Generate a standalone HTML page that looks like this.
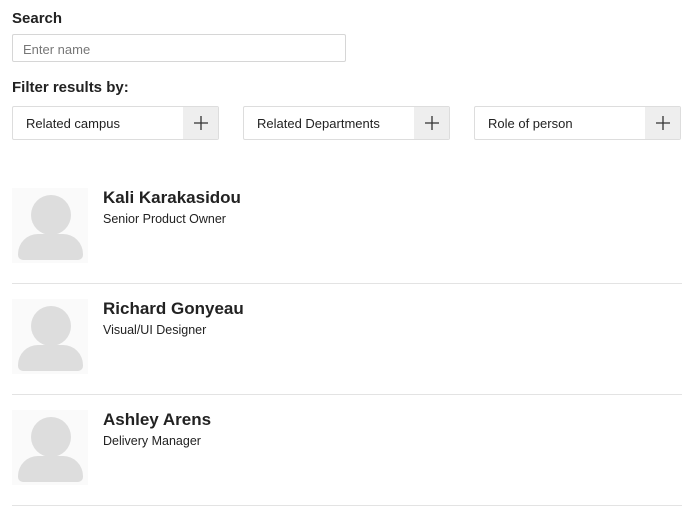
<!DOCTYPE html>
<html><head><style>
body{margin:0;background:#fff;font-family:"Liberation Sans",Arial,sans-serif;color:#222;width:700px;height:518px;overflow:hidden;position:relative}
.a{position:absolute}
h{font-weight:bold;font-size:15px;position:absolute}
.inp{left:12px;top:34px;width:334px;height:28px;border:1px solid #d6d6d6;border-radius:2px;box-sizing:border-box;font-size:13px;color:#777;padding:7px 10px}
.f{top:106px;width:207px;height:34px;border:1px solid #ddd;border-radius:2px;box-sizing:border-box;font-size:13px;color:#222}
.f span{position:absolute;left:13px;top:9px}
.f b{position:absolute;right:0;top:0;width:35px;height:32px;background:#eee}
.f svg{position:absolute;left:11px;top:9px}
.av{left:12px;width:76px;height:75px;background:#fafafa;overflow:hidden}
.hd{position:absolute;left:19px;top:7px;width:40px;height:40px;border-radius:50%;background:#ddd}
.bd{position:absolute;left:6px;top:46px;width:65px;height:26px;border-radius:20px 20px 5px 5px;background:#ddd}
.n{left:103px;font-weight:bold;font-size:17px;color:#222}
.r{left:103px;font-size:12.5px;color:#222}
.ln{left:12px;width:670px;height:1px;background:#e3e3e3}
</style></head><body>
<h style="left:12px;top:10px">Search</h>
<div class="a inp">Enter name</div>
<h style="left:12px;top:79px">Filter results by:</h>
<div class="a f" style="left:12px"><span>Related campus</span><b><svg width="14" height="14"><path d="M7 0V14M0 7H14" stroke="#333" stroke-width="1.3"/></svg></b></div>
<div class="a f" style="left:243px"><span>Related Departments</span><b><svg width="14" height="14"><path d="M7 0V14M0 7H14" stroke="#333" stroke-width="1.3"/></svg></b></div>
<div class="a f" style="left:474px"><span>Role of person</span><b><svg width="14" height="14"><path d="M7 0V14M0 7H14" stroke="#333" stroke-width="1.3"/></svg></b></div>

<div class="a av" style="top:188px"><div class="hd"></div><div class="bd"></div></div>
<div class="a n" style="top:188px">Kali Karakasidou</div>
<div class="a r" style="top:212px">Senior Product Owner</div>
<div class="a ln" style="top:283px"></div>

<div class="a av" style="top:299px"><div class="hd"></div><div class="bd"></div></div>
<div class="a n" style="top:299px">Richard Gonyeau</div>
<div class="a r" style="top:323px">Visual/UI Designer</div>
<div class="a ln" style="top:394px"></div>

<div class="a av" style="top:410px"><div class="hd"></div><div class="bd"></div></div>
<div class="a n" style="top:410px">Ashley Arens</div>
<div class="a r" style="top:434px">Delivery Manager</div>
<div class="a ln" style="top:505px"></div>
</body></html>
